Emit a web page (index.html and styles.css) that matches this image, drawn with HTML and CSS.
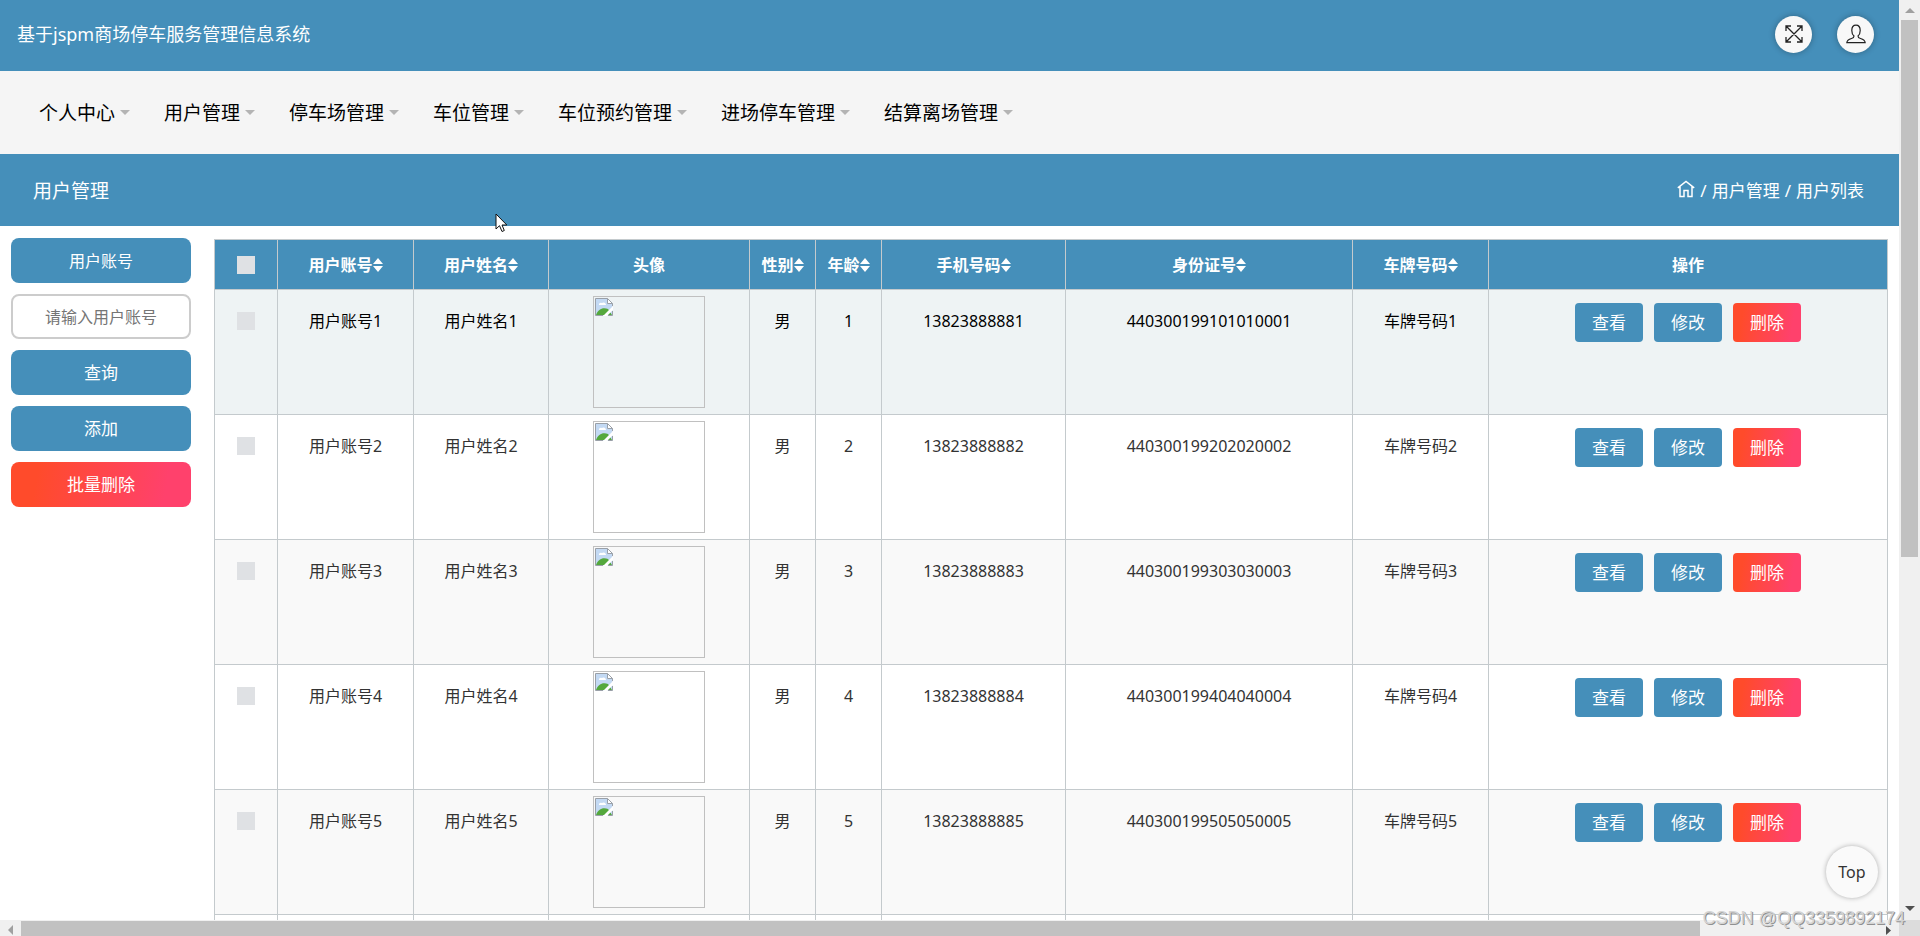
FILE: index.html
```html
<!DOCTYPE html>
<html lang="zh-CN">
<head>
<meta charset="utf-8">
<title>基于jspm商场停车服务管理信息系统</title>
<link rel="stylesheet" href="styles.css">
</head>
<body>
<svg class="defs" aria-hidden="true">
  <symbol id="sort" viewBox="0 0 10 14"><path d="M5 0 10 6H0ZM0 8h10l-5 6Z" fill="currentColor"/></symbol>
  <symbol id="broken" viewBox="0 0 18 18">
    <path d="M.5.5h12l5 5v12H.5z" fill="#c3d9f3"/>
    <path d="M4 7a2 2 0 0 1 3-2 2.500 2.500 0 0 1 4 2z" fill="#fff"/>
    <path d="M1 17c2-6 7-8 12-6l4 6z" fill="#54a83c"/>
    <path d="M18 8 8 18h4l6-6z" fill="#fff"/>
    <path d="M12.500.5v5h5z" fill="#fff"/>
    <path d="M17.500 8V5.500l-5-5H.5v17H8M12.500.5v5h5M17.500 13v4.500H13" fill="none" stroke="#9aa0a8"/>
  </symbol>
</svg>
<div class="window">
  <div class="page">
    <header class="topbar">
      <h1 class="brand">基于jspm商场停车服务管理信息系统</h1>
      <div class="tools">
        <button class="round" type="button" aria-label="全屏">
          <svg width="20" height="20" viewBox="0 0 20 20" fill="none" stroke="#222" stroke-width="1.300"><path d="M2 2l16 16M18 2 2 18M2 7V2h5M13 2h5v5M18 13v5h-5M7 18H2v-5"/></svg>
        </button>
        <button class="round" type="button" aria-label="个人">
          <svg width="20" height="20" viewBox="0 0 20 20" fill="none" stroke="#222" stroke-width="1.200"><path d="M8 12c-1.300-1-2.200-3-2.200-5.500C5.800 3 7.500 1.200 10 1.200S14.200 3 14.200 6.500C14.200 9 13.300 11 12 12c0 1.600.6 2 2.500 2.500 3 .8 4.500 2 4.700 4.200H.8c.2-2.200 1.700-3.400 4.700-4.200C7.400 14 8 13.600 8 12z"/></svg>
        </button>
      </div>
    </header>
    <nav class="menu">
      <a class="menu-item" href="#">个人中心</a>
      <a class="menu-item" href="#">用户管理</a>
      <a class="menu-item" href="#">停车场管理</a>
      <a class="menu-item" href="#">车位管理</a>
      <a class="menu-item" href="#">车位预约管理</a>
      <a class="menu-item" href="#">进场停车管理</a>
      <a class="menu-item" href="#">结算离场管理</a>
    </nav>
    <div class="titlebar">
      <h2 class="title">用户管理</h2>
      <div class="crumbs">
        <a class="home" href="#" aria-label="首页"><svg width="18" height="18" viewBox="0 0 18 18" fill="none" stroke="currentColor" stroke-width="1.500"><path d="M.8 7.800 9 1.500l8.200 6.300M3 6.500v10h4v-6h4v6h4v-10"/></svg></a>
        <span>/</span><a href="#">用户管理</a><span>/</span><span>用户列表</span>
      </div>
    </div>
    <main class="content">
      <form class="filters">
        <label class="block" for="account">用户账号</label>
        <input class="field" id="account" type="text" placeholder="请输入用户账号">
        <button class="block action" type="button">查询</button>
        <button class="block action" type="button">添加</button>
        <button class="block action danger" type="button">批量删除</button>
      </form>
      <table class="grid">
        <colgroup><col class="c-check"><col class="c-mid"><col class="c-name"><col class="c-photo"><col class="c-small"><col class="c-small"><col class="c-phone"><col class="c-id"><col class="c-mid"><col class="c-ops"></colgroup>
        <thead>
          <tr>
            <th><input class="tick" type="checkbox" aria-label="全选"></th>
            <th><button class="sort" type="button">用户账号<svg><use href="#sort"/></svg></button></th>
            <th><button class="sort" type="button">用户姓名<svg><use href="#sort"/></svg></button></th>
            <th>头像</th>
            <th><button class="sort" type="button">性别<svg><use href="#sort"/></svg></button></th>
            <th><button class="sort" type="button">年龄<svg><use href="#sort"/></svg></button></th>
            <th><button class="sort" type="button">手机号码<svg><use href="#sort"/></svg></button></th>
            <th><button class="sort" type="button">身份证号<svg><use href="#sort"/></svg></button></th>
            <th><button class="sort" type="button">车牌号码<svg><use href="#sort"/></svg></button></th>
            <th>操作</th>
          </tr>
        </thead>
        <tbody>
          <tr class="hovered">
            <td><input class="tick" type="checkbox" aria-label="选择用户账号1"></td>
            <td>用户账号1</td><td>用户姓名1</td>
            <td class="photo-cell"><div class="photo"><svg><use href="#broken"/></svg></div></td>
            <td>男</td><td>1</td><td>13823888881</td><td>440300199101010001</td><td>车牌号码1</td>
            <td class="ops-cell"><div class="ops"><button class="op" type="button">查看</button><button class="op" type="button">修改</button><button class="op danger" type="button">删除</button></div></td>
          </tr>
          <tr>
            <td><input class="tick" type="checkbox" aria-label="选择用户账号2"></td>
            <td>用户账号2</td><td>用户姓名2</td>
            <td class="photo-cell"><div class="photo"><svg><use href="#broken"/></svg></div></td>
            <td>男</td><td>2</td><td>13823888882</td><td>440300199202020002</td><td>车牌号码2</td>
            <td class="ops-cell"><div class="ops"><button class="op" type="button">查看</button><button class="op" type="button">修改</button><button class="op danger" type="button">删除</button></div></td>
          </tr>
          <tr>
            <td><input class="tick" type="checkbox" aria-label="选择用户账号3"></td>
            <td>用户账号3</td><td>用户姓名3</td>
            <td class="photo-cell"><div class="photo"><svg><use href="#broken"/></svg></div></td>
            <td>男</td><td>3</td><td>13823888883</td><td>440300199303030003</td><td>车牌号码3</td>
            <td class="ops-cell"><div class="ops"><button class="op" type="button">查看</button><button class="op" type="button">修改</button><button class="op danger" type="button">删除</button></div></td>
          </tr>
          <tr>
            <td><input class="tick" type="checkbox" aria-label="选择用户账号4"></td>
            <td>用户账号4</td><td>用户姓名4</td>
            <td class="photo-cell"><div class="photo"><svg><use href="#broken"/></svg></div></td>
            <td>男</td><td>4</td><td>13823888884</td><td>440300199404040004</td><td>车牌号码4</td>
            <td class="ops-cell"><div class="ops"><button class="op" type="button">查看</button><button class="op" type="button">修改</button><button class="op danger" type="button">删除</button></div></td>
          </tr>
          <tr>
            <td><input class="tick" type="checkbox" aria-label="选择用户账号5"></td>
            <td>用户账号5</td><td>用户姓名5</td>
            <td class="photo-cell"><div class="photo"><svg><use href="#broken"/></svg></div></td>
            <td>男</td><td>5</td><td>13823888885</td><td>440300199505050005</td><td>车牌号码5</td>
            <td class="ops-cell"><div class="ops"><button class="op" type="button">查看</button><button class="op" type="button">修改</button><button class="op danger" type="button">删除</button></div></td>
          </tr>
          <tr class="spacer"><td></td><td></td><td></td><td></td><td></td><td></td><td></td><td></td><td></td><td></td></tr>
        </tbody>
      </table>
    </main>
  </div>
  <div class="vbar" aria-hidden="true">
    <svg width="10" height="20" viewBox="0 0 10 20"><path d="M0 13 5 8l5 5z" fill="#a0a0a0"/></svg>
    <div class="vtrack"><div class="thumb vthumb"></div></div>
    <svg width="10" height="24" viewBox="0 0 10 24"><path d="M0 10h10l-5 5z" fill="#505050"/></svg>
  </div>
  <div class="hbar" aria-hidden="true">
    <svg width="21" height="16" viewBox="0 0 21 16"><path d="M13 5v10l-5-5z" fill="#a0a0a0"/></svg>
    <div class="htrack"><div class="thumb hthumb"></div></div>
    <svg width="17" height="16" viewBox="0 0 17 16"><path d="M4 6v9l5-4.500z" fill="#505050"/></svg>
  </div>
  <div class="corner"></div>
</div>
<button class="to-top" type="button">Top</button>
<div class="watermark">CSDN @QQ3359892174</div>
<svg class="cursor" width="13" height="20" viewBox="0 0 13 20" aria-hidden="true"><path d="M1 1v15l3.500-3.300L7 18.500l2.300-1L7 12h4.800z" fill="#fff" stroke="#111"/></svg>
</body>
</html>
```
FILE: styles.css
```css
* { box-sizing: border-box; }

body {
  margin: 0;
  overflow: hidden;
  background: #fff;
  color: #333;
  font: 16px/24px "Noto Sans", "Noto Sans CJK SC", sans-serif;
}

button, input { font: inherit; color: inherit; }
button { padding: 0; border: 0; background: none; cursor: pointer; }
a { color: inherit; text-decoration: none; }
svg { display: block; flex: none; }
.defs { position: absolute; width: 0; height: 0; }

.window {
  display: grid;
  grid-template: minmax(0, 1fr) 16px / minmax(0, 1fr) 21px;
  height: 100vh;
}
.page { overflow: hidden; }

.topbar {
  display: flex;
  align-items: center;
  justify-content: space-between;
  height: 71px;
  padding: 0 25px 3px 17px;
  background: #458fba;
  color: #fff;
}
.brand { margin: 0; font-size: 18px; font-weight: 400; }
.tools { display: flex; gap: 25px; }
.round {
  display: grid;
  place-items: center;
  width: 37px;
  height: 37px;
  border-radius: 50%;
  background: #f8f8f8;
  box-shadow: 0 0 6px rgba(0, 0, 0, .3);
}

.menu {
  display: flex;
  align-items: center;
  gap: 34px;
  height: 83px;
  padding: 0 39px;
  background: #f5f5f5;
  color: #000;
  font-size: 19px;
}
.menu-item { display: flex; align-items: center; gap: 5px; }
.menu-item::after {
  content: "";
  border: 5px solid transparent;
  border-top-color: #b4b4b4;
  border-bottom: 0;
}

.titlebar {
  display: flex;
  align-items: center;
  justify-content: space-between;
  height: 72px;
  padding: 2px 35px 0 33px;
  background: #458fba;
  color: #fff;
}
.title { margin: 0; font-size: 19px; font-weight: 400; }
.crumbs { display: flex; align-items: center; gap: 5px; font-size: 17px; }
.home { padding-bottom: 5px; }

.content { display: flex; align-items: flex-start; gap: 23px; padding: 12px 11px; }
.filters { display: flex; flex: none; flex-direction: column; gap: 11px; width: 180px; }
.block, .field {
  display: block;
  width: 100%;
  height: 45px;
  border-radius: 8px;
  text-align: center;
}
.block { background: #458fba; color: #fff; line-height: 46px; }
.action { font-size: 17px; }
.field { border: 2px solid #ccc; background: #fff; outline: 0; }
.field::placeholder { color: #757575; opacity: 1; }
.danger { background: linear-gradient(100deg, #ff4b2b 15%, #ff416c 85%); }

.grid {
  flex: 1;
  width: 100%;
  min-width: 0;
  margin-top: 1px;
  border-collapse: collapse;
  table-layout: fixed;
  text-align: center;
}
.c-check { width: 63px; }
.c-mid { width: 136px; }
.c-name { width: 135px; }
.c-photo { width: 201px; }
.c-small { width: 66px; }
.c-phone { width: 184px; }
.c-id { width: 287px; }
.c-ops { width: 399px; }
th, td { padding: 0; border: 1px solid #c4cacd; }
th { height: 50px; background: #458fba; color: #fff; font-weight: 700; }
td { padding-top: 19px; vertical-align: top; }
tbody tr:nth-child(odd) { background: #f9f9f9; }
tbody tr.hovered { background: #eef3f4; color: #000; }
tbody .spacer { height: 125px; background: #fff; }

.tick {
  display: block;
  width: 18px;
  height: 18px;
  margin: 0 auto;
  appearance: none;
  background: #dfe1e4;
}
td .tick { margin-top: 3px; }
.sort { display: inline-flex; align-items: center; white-space: nowrap; }
.sort svg { width: 10px; height: 14px; }

td.photo-cell { padding: 6px 0; }
.photo { width: 112px; height: 112px; margin: 0 auto; padding: 1px; border: 1px solid #c0c0c0; }
.photo svg { width: 18px; height: 18px; }

td.ops-cell { padding-top: 13px; }
.ops { display: flex; justify-content: center; gap: 11px; }
.op { width: 68px; height: 39px; border-radius: 4px; color: #fff; font-size: 17px; }
.op:not(.danger) { background: #458fba; }

.vbar { display: flex; flex-direction: column; align-items: center; background: #f0f0f0; }
.vtrack { display: flex; flex: 1; width: 17px; }
.thumb { background: #c1c1c1; }
.vthumb { width: 100%; height: 61.3%; }
.hbar { display: flex; background: #f0f0f0; }
.htrack { flex: 1; padding-top: 1px; }
.hthumb { width: 90.2%; height: 100%; }
.corner { background: #dcdcdc; }

.to-top {
  position: absolute;
  right: 42px;
  bottom: 38px;
  width: 52px;
  height: 52px;
  border-radius: 50%;
  background: #fafafa;
  box-shadow: 0 0 5px rgba(0, 0, 0, .3);
}
.watermark {
  position: absolute;
  right: 15px;
  bottom: 6px;
  color: #d4d4d4;
  font: 18px/24px "Liberation Sans", sans-serif;
  text-shadow: 1px 1px 0 #909090;
}
.cursor { position: absolute; left: 495px; top: 213px; }
```
